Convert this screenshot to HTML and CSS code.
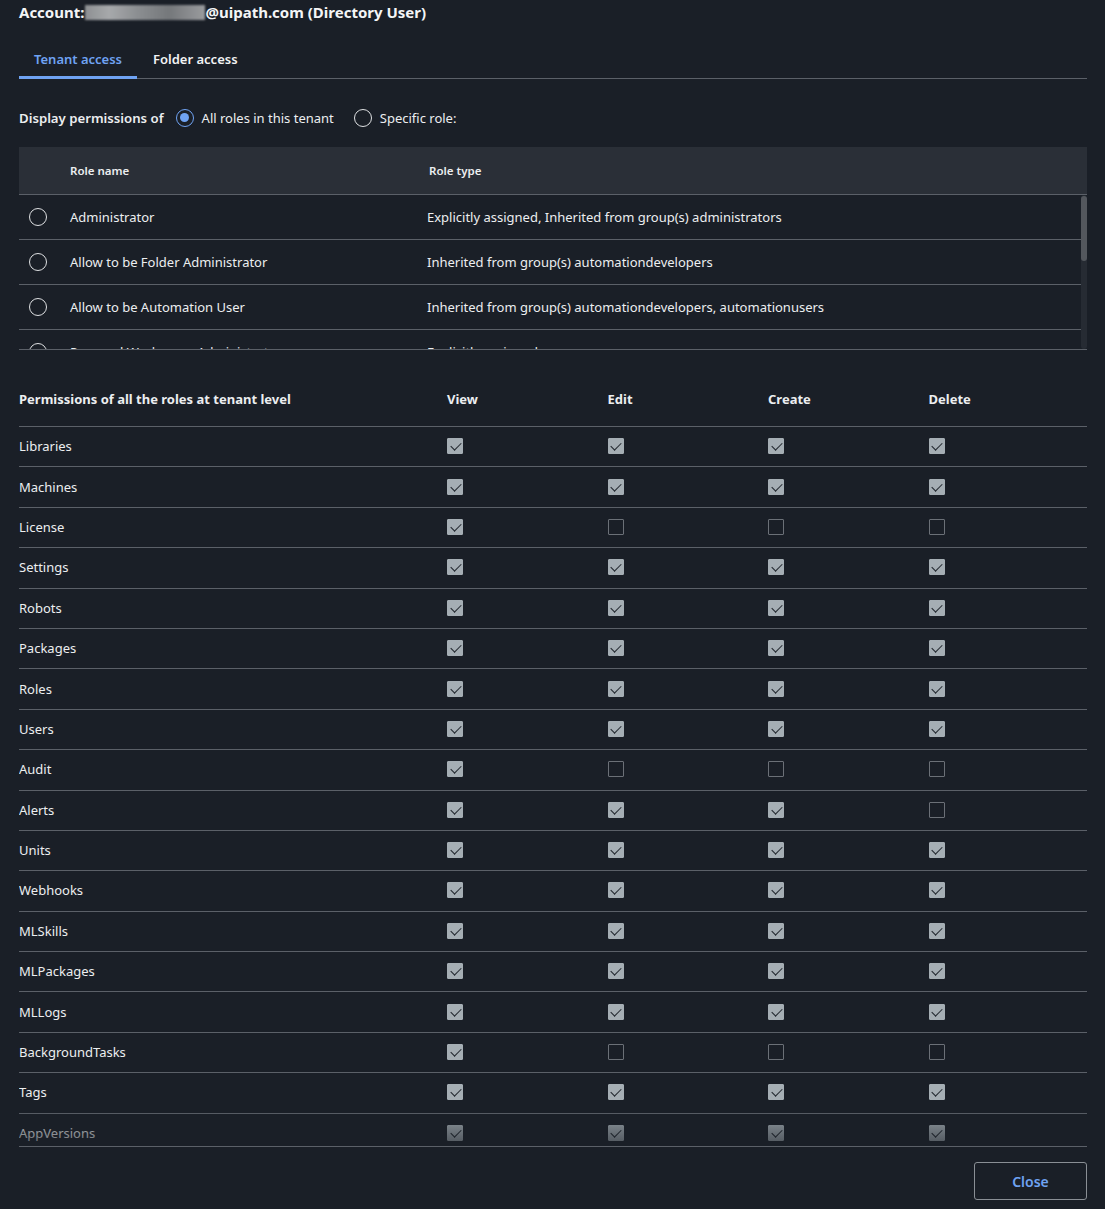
FILE: index.html
```html
<!DOCTYPE html>
<html>
<head>
<meta charset="utf-8">
<link rel="stylesheet" href="styles.css">
</head>
<body>
<div class="page">
  <h1 class="title">Account:<span class="blur"></span>@uipath.com (Directory User)</h1>

  <div class="tabs">
    <div class="tab active">Tenant access</div>
    <div class="tab">Folder access</div>
  </div>

  <div class="display">
    <span class="display-label">Display permissions of</span>
    <label class="opt"><span class="radio checked"></span>All roles in this tenant</label>
    <label class="opt"><span class="radio"></span>Specific role:</label>
  </div>

  <div class="roles">
    <div class="roles-head">
      <div class="c-sel"></div>
      <div class="c-name">Role name</div>
      <div class="c-type">Role type</div>
    </div>
    <div class="roles-scroll">
      <div class="roles-body">
        <div class="role-row"><div class="c-sel"><span class="radio"></span></div><div class="c-name">Administrator</div><div class="c-type">Explicitly assigned, Inherited from group(s) administrators</div></div>
        <div class="role-row"><div class="c-sel"><span class="radio"></span></div><div class="c-name">Allow to be Folder Administrator</div><div class="c-type">Inherited from group(s) automationdevelopers</div></div>
        <div class="role-row"><div class="c-sel"><span class="radio"></span></div><div class="c-name">Allow to be Automation User</div><div class="c-type">Inherited from group(s) automationdevelopers, automationusers</div></div>
        <div class="role-row"><div class="c-sel"><span class="radio"></span></div><div class="c-name">Personal Workspace Administrator</div><div class="c-type">Explicitly assigned</div></div>
      </div>
      <div class="scrollbar"><div class="thumb"></div></div>
    </div>
  </div>

  <div class="perms">
    <div class="perm-head">
      <div class="p-name">Permissions of all the roles at tenant level</div>
      <div class="p-col">View</div>
      <div class="p-col">Edit</div>
      <div class="p-col">Create</div>
      <div class="p-col">Delete</div>
    </div>
    <div class="perm-body">
      <div class="perm-row"><div class="p-name">Libraries</div><div class="p-col"><span class="cb on"></span></div><div class="p-col"><span class="cb on"></span></div><div class="p-col"><span class="cb on"></span></div><div class="p-col"><span class="cb on"></span></div></div>
      <div class="perm-row"><div class="p-name">Machines</div><div class="p-col"><span class="cb on"></span></div><div class="p-col"><span class="cb on"></span></div><div class="p-col"><span class="cb on"></span></div><div class="p-col"><span class="cb on"></span></div></div>
      <div class="perm-row"><div class="p-name">License</div><div class="p-col"><span class="cb on"></span></div><div class="p-col"><span class="cb"></span></div><div class="p-col"><span class="cb"></span></div><div class="p-col"><span class="cb"></span></div></div>
      <div class="perm-row"><div class="p-name">Settings</div><div class="p-col"><span class="cb on"></span></div><div class="p-col"><span class="cb on"></span></div><div class="p-col"><span class="cb on"></span></div><div class="p-col"><span class="cb on"></span></div></div>
      <div class="perm-row"><div class="p-name">Robots</div><div class="p-col"><span class="cb on"></span></div><div class="p-col"><span class="cb on"></span></div><div class="p-col"><span class="cb on"></span></div><div class="p-col"><span class="cb on"></span></div></div>
      <div class="perm-row"><div class="p-name">Packages</div><div class="p-col"><span class="cb on"></span></div><div class="p-col"><span class="cb on"></span></div><div class="p-col"><span class="cb on"></span></div><div class="p-col"><span class="cb on"></span></div></div>
      <div class="perm-row"><div class="p-name">Roles</div><div class="p-col"><span class="cb on"></span></div><div class="p-col"><span class="cb on"></span></div><div class="p-col"><span class="cb on"></span></div><div class="p-col"><span class="cb on"></span></div></div>
      <div class="perm-row"><div class="p-name">Users</div><div class="p-col"><span class="cb on"></span></div><div class="p-col"><span class="cb on"></span></div><div class="p-col"><span class="cb on"></span></div><div class="p-col"><span class="cb on"></span></div></div>
      <div class="perm-row"><div class="p-name">Audit</div><div class="p-col"><span class="cb on"></span></div><div class="p-col"><span class="cb"></span></div><div class="p-col"><span class="cb"></span></div><div class="p-col"><span class="cb"></span></div></div>
      <div class="perm-row"><div class="p-name">Alerts</div><div class="p-col"><span class="cb on"></span></div><div class="p-col"><span class="cb on"></span></div><div class="p-col"><span class="cb on"></span></div><div class="p-col"><span class="cb"></span></div></div>
      <div class="perm-row"><div class="p-name">Units</div><div class="p-col"><span class="cb on"></span></div><div class="p-col"><span class="cb on"></span></div><div class="p-col"><span class="cb on"></span></div><div class="p-col"><span class="cb on"></span></div></div>
      <div class="perm-row"><div class="p-name">Webhooks</div><div class="p-col"><span class="cb on"></span></div><div class="p-col"><span class="cb on"></span></div><div class="p-col"><span class="cb on"></span></div><div class="p-col"><span class="cb on"></span></div></div>
      <div class="perm-row"><div class="p-name">MLSkills</div><div class="p-col"><span class="cb on"></span></div><div class="p-col"><span class="cb on"></span></div><div class="p-col"><span class="cb on"></span></div><div class="p-col"><span class="cb on"></span></div></div>
      <div class="perm-row"><div class="p-name">MLPackages</div><div class="p-col"><span class="cb on"></span></div><div class="p-col"><span class="cb on"></span></div><div class="p-col"><span class="cb on"></span></div><div class="p-col"><span class="cb on"></span></div></div>
      <div class="perm-row"><div class="p-name">MLLogs</div><div class="p-col"><span class="cb on"></span></div><div class="p-col"><span class="cb on"></span></div><div class="p-col"><span class="cb on"></span></div><div class="p-col"><span class="cb on"></span></div></div>
      <div class="perm-row"><div class="p-name">BackgroundTasks</div><div class="p-col"><span class="cb on"></span></div><div class="p-col"><span class="cb"></span></div><div class="p-col"><span class="cb"></span></div><div class="p-col"><span class="cb"></span></div></div>
      <div class="perm-row"><div class="p-name">Tags</div><div class="p-col"><span class="cb on"></span></div><div class="p-col"><span class="cb on"></span></div><div class="p-col"><span class="cb on"></span></div><div class="p-col"><span class="cb on"></span></div></div>
      <div class="perm-row"><div class="p-name">AppVersions</div><div class="p-col"><span class="cb on"></span></div><div class="p-col"><span class="cb on"></span></div><div class="p-col"><span class="cb on"></span></div><div class="p-col"><span class="cb on"></span></div></div>
    </div>
    <div class="fade"></div>
  </div>

  <div class="actions">
    <button class="close">Close</button>
  </div>
</div>
</body>
</html>
```

FILE: styles.css
```css
* { box-sizing: border-box; }
html, body { margin: 0; padding: 0; }
body {
  background: #1a1f27;
  color: #eceef0;
  font-family: "Noto Sans", "Open Sans", sans-serif;
  font-size: 13px;
}
.page {
  padding: 0 18px 0 19px;
  width: 1105px;
  height: 1209px;
  overflow: hidden;
}
.title {
  margin: 0;
  padding-top: 1px;
  font-size: 15px;
  font-weight: 700;
  line-height: 22px;
  color: #f4f5f6;
  display: flex;
  align-items: center;
}
.blur {
  display: inline-block;
  width: 120px;
  height: 15px;
  margin-left: 1px;
  background: linear-gradient(90deg, #8d9093 0%, #a7a9ab 20%, #8a8d90 45%, #75787b 70%, #9a9c9e 100%);
  filter: blur(1.2px);
}
.tabs {
  display: flex;
  margin-top: 17px;
  border-bottom: 1px solid #5b6068;
  height: 39px;
}
.tab {
  padding: 10px 15px 0;
  font-size: 13px;
  font-weight: 600;
  color: #f2f3f4;
  line-height: 18px;
}
.tab + .tab { padding-left: 16px; }
.tab.active {
  color: #6fa3f3;
  border-bottom: 3px solid #6fa3f3;
  margin-bottom: -1px;
}
.display {
  display: flex;
  align-items: center;
  margin-top: 28px;
  height: 22px;
  font-size: 13px;
}
.display-label { font-weight: 600; margin-right: 12px; font-size: 13.2px; }
.opt {
  display: flex;
  align-items: center;
  margin-right: 19px;
}
.opt .radio { margin-right: 8px; }
.opt + .opt { margin-left: 1px; }
.radio {
  display: inline-block;
  width: 18px;
  height: 18px;
  border-radius: 50%;
  border: 1.5px solid #dfe1e3;
  position: relative;
  flex: none;
}
.radio.checked { border-color: #6fa3f3; }
.radio.checked::after {
  content: "";
  position: absolute;
  left: 3px; top: 3px;
  width: 9px; height: 9px;
  border-radius: 50%;
  background: #6fa3f3;
}
.roles {
  margin-top: 18px;
  border-bottom: 1px solid #5b6068;
}
.roles-head {
  display: flex;
  align-items: center;
  height: 48px;
  background: #2a2f37;
  border-bottom: 1px solid #5b6068;
  font-size: 11.5px;
  font-weight: 600;
}
.roles-head .c-type { padding-left: 2px; }
.roles-scroll {
  display: flex;
  height: 154px;
}
.roles-body {
  flex: 1;
  overflow: hidden;
}
.scrollbar {
  width: 6px;
  background: #262b33;
  border-radius: 3px;
  padding-top: 1px;
}
.thumb {
  height: 65px;
  background: #53575d;
  border-radius: 3px;
}
.role-row {
  display: flex;
  align-items: center;
  height: 45px;
  padding-bottom: 1px;
  border-bottom: 1px solid #5b6068;
  flex: none;
}
.c-sel { width: 51px; padding-left: 10px; display: flex; align-items: center; flex: none; }
.c-name { width: 357px; flex: none; }
.c-type { flex: 1; }
.perms {
  margin-top: 22px;
  position: relative;
  border-bottom: 1px solid #5b6068;
}
.perm-head {
  display: grid;
  grid-template-columns: 427px repeat(4, 160.5px);
  align-items: center;
  height: 55px;
  border-bottom: 1px solid #5b6068;
  font-weight: 700;
  font-size: 13px;
}
.perm-body {
  height: 719px;
  overflow: hidden;
}
.perm-row {
  display: grid;
  grid-template-columns: 427px repeat(4, 160.5px);
  align-items: center;
  height: 40.4px;
  padding-bottom: 1px;
  border-bottom: 1px solid #5b6068;
}
.p-col { padding-left: 1px; display: flex; align-items: center; }
.cb {
  display: inline-block;
  width: 16px;
  height: 16px;
  border: 1px solid #6b7077;
  border-radius: 1px;
  position: relative;
}
.cb.on {
  background: #a5aeb4;
  border-color: #a5aeb4;
}
.cb.on::after {
  content: "";
  position: absolute;
  left: 4.5px;
  top: 1px;
  width: 5px;
  height: 9px;
  border-right: 1.6px solid #20262d;
  border-bottom: 1.6px solid #20262d;
  transform: rotate(45deg);
}
.fade {
  position: absolute;
  left: 0; right: 0; bottom: 0;
  height: 34px;
  background: linear-gradient(180deg, rgba(26,31,39,0.05) 0%, rgba(26,31,39,0.35) 45%, rgba(26,31,39,0.65) 100%);
  pointer-events: none;
}
.actions {
  display: flex;
  justify-content: flex-end;
  margin-top: 15px;
}
.close {
  width: 113px;
  height: 38px;
  background: transparent;
  border: 1px solid #8a8f95;
  border-radius: 3px;
  color: #6fa3f3;
  font-family: "Noto Sans", sans-serif;
  font-size: 14px;
  font-weight: 600;
}
```
